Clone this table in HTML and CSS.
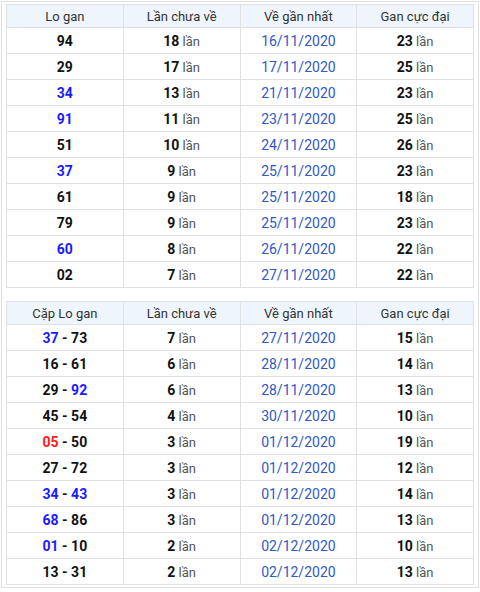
FILE: index.html
```html
<!DOCTYPE html>
<html lang="vi">
<head>
<meta charset="utf-8">
<link rel="stylesheet" href="styles.css">
</head>
<body>
<div class="box">
  <table class="gan">
    <thead>
      <tr><th>Lo gan</th><th>Lần chưa về</th><th>Về gần nhất</th><th>Gan cực đại</th></tr>
    </thead>
    <tbody>
      <tr><td class="num">94</td><td><b>18</b> lần</td><td class="date">16/11/2020</td><td><b>23</b> lần</td></tr>
      <tr><td class="num">29</td><td><b>17</b> lần</td><td class="date">17/11/2020</td><td><b>25</b> lần</td></tr>
      <tr><td class="num"><span class="blue">34</span></td><td><b>13</b> lần</td><td class="date">21/11/2020</td><td><b>23</b> lần</td></tr>
      <tr><td class="num"><span class="blue">91</span></td><td><b>11</b> lần</td><td class="date">23/11/2020</td><td><b>25</b> lần</td></tr>
      <tr><td class="num">51</td><td><b>10</b> lần</td><td class="date">24/11/2020</td><td><b>26</b> lần</td></tr>
      <tr><td class="num"><span class="blue">37</span></td><td><b>9</b> lần</td><td class="date">25/11/2020</td><td><b>23</b> lần</td></tr>
      <tr><td class="num">61</td><td><b>9</b> lần</td><td class="date">25/11/2020</td><td><b>18</b> lần</td></tr>
      <tr><td class="num">79</td><td><b>9</b> lần</td><td class="date">25/11/2020</td><td><b>23</b> lần</td></tr>
      <tr><td class="num"><span class="blue">60</span></td><td><b>8</b> lần</td><td class="date">26/11/2020</td><td><b>22</b> lần</td></tr>
      <tr><td class="num">02</td><td><b>7</b> lần</td><td class="date">27/11/2020</td><td><b>22</b> lần</td></tr>
    </tbody>
  </table>
  <table class="gan">
    <thead>
      <tr><th>Cặp Lo gan</th><th>Lần chưa về</th><th>Về gần nhất</th><th>Gan cực đại</th></tr>
    </thead>
    <tbody>
      <tr><td class="num"><span class="blue">37</span> - 73</td><td><b>7</b> lần</td><td class="date">27/11/2020</td><td><b>15</b> lần</td></tr>
      <tr><td class="num">16 - 61</td><td><b>6</b> lần</td><td class="date">28/11/2020</td><td><b>14</b> lần</td></tr>
      <tr><td class="num">29 - <span class="blue">92</span></td><td><b>6</b> lần</td><td class="date">28/11/2020</td><td><b>13</b> lần</td></tr>
      <tr><td class="num">45 - 54</td><td><b>4</b> lần</td><td class="date">30/11/2020</td><td><b>10</b> lần</td></tr>
      <tr><td class="num"><span class="red">05</span> - 50</td><td><b>3</b> lần</td><td class="date">01/12/2020</td><td><b>19</b> lần</td></tr>
      <tr><td class="num">27 - 72</td><td><b>3</b> lần</td><td class="date">01/12/2020</td><td><b>12</b> lần</td></tr>
      <tr><td class="num"><span class="blue">34</span> - <span class="blue">43</span></td><td><b>3</b> lần</td><td class="date">01/12/2020</td><td><b>14</b> lần</td></tr>
      <tr><td class="num"><span class="blue">68</span> - 86</td><td><b>3</b> lần</td><td class="date">01/12/2020</td><td><b>13</b> lần</td></tr>
      <tr><td class="num"><span class="blue">01</span> - 10</td><td><b>2</b> lần</td><td class="date">02/12/2020</td><td><b>10</b> lần</td></tr>
      <tr><td class="num">13 - 31</td><td><b>2</b> lần</td><td class="date">02/12/2020</td><td><b>13</b> lần</td></tr>
    </tbody>
  </table>
</div>
</body>
</html>
```
FILE: styles.css
```css
html, body {
  margin: 0;
  padding: 0;
  background: #ffffff;
}
body {
  font-family: Roboto, "Liberation Sans", Arial, sans-serif;
  font-size: 13px;
  color: #222;
}
.box {
  margin: 1px;
  border: 1px solid #dedede;
  padding: 2px 4px;
  display: flex;
  flex-direction: column;
  gap: 13px;
}
.gan {
  width: 100%;
  border-collapse: collapse;
  table-layout: fixed;
}
.gan th, .gan td {
  border: 1px solid #e1e1e1;
  text-align: center;
  padding: 0;
}
.gan th {
  background: #eef5fd;
  font-weight: 400;
  color: #333;
  height: 22px;
}
.gan td {
  height: 25px;
  color: #555;
}
.gan td b {
  color: #111;
  font-weight: 700;
  font-size: 14px;
}
.gan td.num {
  font-weight: 700;
  color: #111;
  font-size: 14px;
}
.blue { color: #1a1aff; }
.red { color: #ff1a1a; }
.gan td.date {
  color: #2f58c6;
  font-size: 14px;
}
```
